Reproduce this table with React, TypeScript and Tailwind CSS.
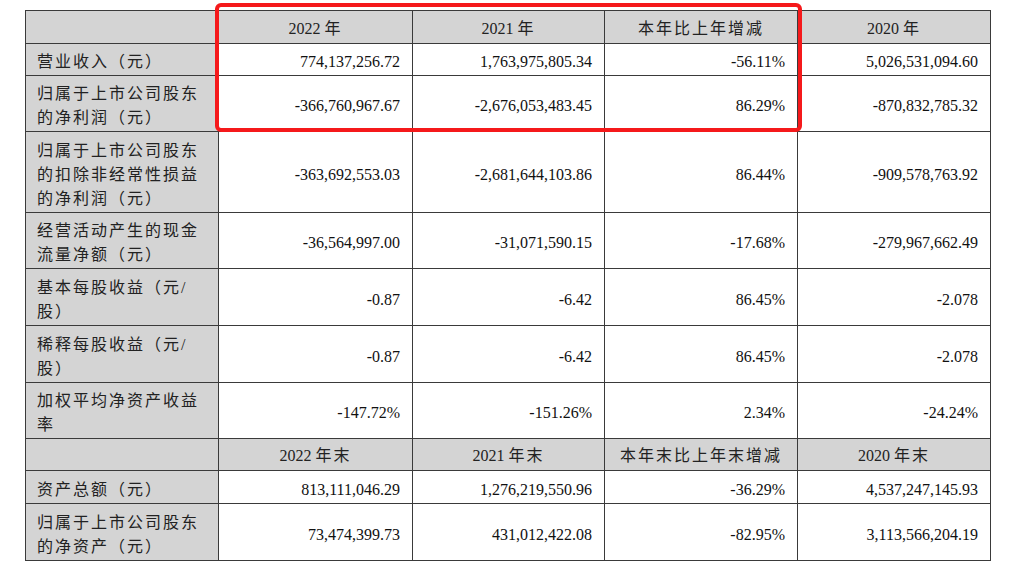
import React from 'react';

type Row = {
  label: string[];
  values: string[];
  h: string;
};

const header1 = ['2022 年', '2021 年', '本年比上年增减', '2020 年'];
const header2 = ['2022 年末', '2021 年末', '本年末比上年末增减', '2020 年末'];

const rowsA: Row[] = [
  { label: ['营业收入（元）'], values: ['774,137,256.72', '1,763,975,805.34', '-56.11%', '5,026,531,094.60'], h: 'h-[32px]' },
  { label: ['归属于上市公司股东', '的净利润（元）'], values: ['-366,760,967.67', '-2,676,053,483.45', '86.29%', '-870,832,785.32'], h: 'h-[56px]' },
  { label: ['归属于上市公司股东', '的扣除非经常性损益', '的净利润（元）'], values: ['-363,692,553.03', '-2,681,644,103.86', '86.44%', '-909,578,763.92'], h: 'h-[81px]' },
  { label: ['经营活动产生的现金', '流量净额（元）'], values: ['-36,564,997.00', '-31,071,590.15', '-17.68%', '-279,967,662.49'], h: 'h-[56px]' },
  { label: ['基本每股收益（元/', '股）'], values: ['-0.87', '-6.42', '86.45%', '-2.078'], h: 'h-[57px]' },
  { label: ['稀释每股收益（元/', '股）'], values: ['-0.87', '-6.42', '86.45%', '-2.078'], h: 'h-[57px]' },
  { label: ['加权平均净资产收益', '率'], values: ['-147.72%', '-151.26%', '2.34%', '-24.24%'], h: 'h-[56px]' },
];

const rowsB: Row[] = [
  { label: ['资产总额（元）'], values: ['813,111,046.29', '1,276,219,550.96', '-36.29%', '4,537,247,145.93'], h: 'h-[33px]' },
  { label: ['归属于上市公司股东', '的净资产（元）'], values: ['73,474,399.73', '431,012,422.08', '-82.95%', '3,113,566,204.19'], h: 'h-[57px]' },
];

// split "2022 年" so only the CJK part gets the wider tracking
const HeadText: React.FC<{ text: string }> = ({ text }) => {
  const parts = text.split(/(\d+\s?)/).filter(Boolean);
  return (
    <>
      {parts.map((p, i) =>
        /\d/.test(p) ? (
          <span key={i}>{p}</span>
        ) : (
          <span key={i} className="tracking-[2px]">{p}</span>
        )
      )}
    </>
  );
};

const cell = 'border border-[#3a3a3a] align-middle';

const HeaderRow: React.FC<{ cols: string[]; h: string }> = ({ cols, h }) => (
  <tr className={`${h} bg-[#d4d4d4]`}>
    <td className={cell}></td>
    {cols.map((c) => (
      <td key={c} className={`${cell} text-center pt-[3px] text-[#222]`}>
        <HeadText text={c} />
      </td>
    ))}
  </tr>
);

const DataRow: React.FC<{ row: Row }> = ({ row }) => (
  <tr className={row.h}>
    <td className={`${cell} bg-[#d4d4d4] pl-[11px] pt-[5px] tracking-[2px] leading-[24px] text-[#222]`}>
      {row.label.map((l) => (
        <div key={l} className="whitespace-nowrap">{l}</div>
      ))}
    </td>
    {row.values.map((v, i) => (
      <td key={i} className={`${cell} bg-white text-right pr-[12px] pt-[5px] text-[#111]`}>
        {v}
      </td>
    ))}
  </tr>
);

export default function App() {
  return (
    <div
      className="w-[1016px] h-[571px] bg-white overflow-hidden pt-[10px] pl-[25px] text-[16px]"
      style={{ fontFamily: '"Liberation Serif", "Noto Sans CJK SC", serif' }}
    >
      <div className="relative w-[965px]">
        <table className="w-[965px] table-fixed border-collapse">
          <colgroup>
            <col className="w-[193px]" />
            <col className="w-[194px]" />
            <col className="w-[192px]" />
            <col className="w-[193px]" />
            <col className="w-[193px]" />
          </colgroup>
          <tbody>
            <HeaderRow cols={header1} h="h-[33px]" />
            {rowsA.map((r, i) => (
              <DataRow key={i} row={r} />
            ))}
            <HeaderRow cols={header2} h="h-[32px]" />
            {rowsB.map((r, i) => (
              <DataRow key={i} row={r} />
            ))}
          </tbody>
        </table>
        {/* red highlight box over the first two data rows */}
        <div className="absolute left-[190px] top-[-7px] w-[587px] h-[129px] border-[4px] border-[#f5191b] rounded-[6px] pointer-events-none" />
      </div>
    </div>
  );
}
